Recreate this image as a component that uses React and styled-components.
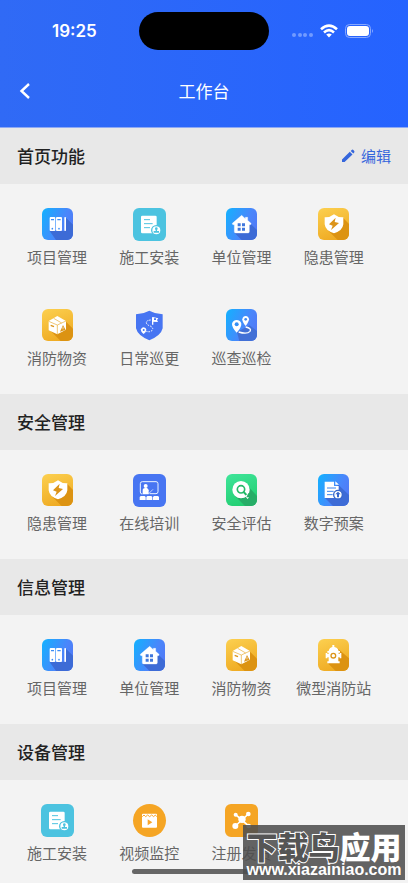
import React from 'react';
import styled, { createGlobalStyle } from 'styled-components';

const GlobalStyle = createGlobalStyle`
  * {
    box-sizing: border-box;
  }
  body {
    margin: 0;
    background: #f3f3f3;
    font-family: "Noto Sans CJK SC", sans-serif;
  }
`;

const gradients = {
  blue: 'linear-gradient(115deg, #12b2ff 0%, #4a86fb 60%, #5474f4 100%)',
  gold: 'linear-gradient(160deg, #fcd050 0%, #eda51c 100%)',
  green: 'linear-gradient(160deg, #3fe59a 0%, #1fcb6c 100%)',
  teal: '#4cc3e0',
  royal: '#4775f2',
  amber: '#f5a524',
  none: 'transparent',
};

const Screen = styled.div`
  display: flex;
  flex-direction: column;
  height: 100vh;
  position: relative;
  overflow: hidden;
`;
const Header = styled.header`
  flex: none;
  padding-bottom: 7px;
  color: white;
  background: linear-gradient(90deg, #306af5, #2563ff);
  border-bottom: 1px solid #8ea9f3;
`;
const StatusBar = styled.div`
  display: grid;
  grid-template-columns: 1fr 130px 1fr;
  align-items: center;
  height: 62px;
`;
const Time = styled.time`
  padding-left: 52px;
  font: 600 17px/22px Inter, sans-serif;
`;
const Island = styled.div`
  height: 38px;
  border-radius: 19px;
  background: black;
`;
const StatusIcons = styled.div`
  display: flex;
  align-items: center;
  justify-content: flex-end;
  gap: 7px;
  padding-right: 34px;
`;
const NavBar = styled.nav`
  display: grid;
  grid-template-columns: 50px 1fr 50px;
  align-items: center;
  height: 58px;
`;
const BackButton = styled.button`
  display: flex;
  padding: 8px 18px;
  border: 0;
  color: inherit;
  background: none;
`;
const PageTitle = styled.h1`
  margin: 0;
  font-size: 17px;
  font-weight: 400;
  line-height: 24px;
  text-align: center;
`;

const Content = styled.main`
  flex: 1;
  min-height: 0;
  overflow-y: auto;
  scrollbar-width: none;
`;
const SectionHead = styled.div`
  display: flex;
  align-items: center;
  justify-content: space-between;
  height: 56px;
  padding: 0 17px;
  background: #e8e8e8;
`;
const SectionTitle = styled.h2`
  margin: 0;
  color: #222;
  font-size: 17px;
  font-weight: 500;
  line-height: 24px;
`;
const EditButton = styled.button`
  display: flex;
  align-items: center;
  gap: 6px;
  padding: 0;
  border: 0;
  color: #3566dc;
  background: none;
  font: inherit;
  font-size: 15px;
  line-height: 20px;
`;
const Grid = styled.div`
  display: grid;
  grid-template-columns: repeat(4, 1fr);
  padding: 0 28px 8px 11px;
`;
const Item = styled.button`
  display: flex;
  flex-direction: column;
  align-items: center;
  gap: 6px;
  padding: 24px 0 18px;
  border: 0;
  color: #666;
  background: none;
  font: inherit;
  font-size: 15px;
  line-height: 20px;
  white-space: nowrap;
`;
const IconBox = styled.span`
  display: flex;
  justify-content: center;
  width: 33px;
  height: 33px;
`;
const Tile = styled.svg`
  width: ${({$full}) => ($full ? '33px' : '31px')};
  height: ${({$full}) => ($full ? '33px' : '32px')};
  border-radius: ${({$round}) => ($round ? '50%' : '6px')};
  background: ${({$fill}) => gradients[$fill]};
`;

const HomeBar = styled.div`
  position: absolute;
  bottom: 9px;
  left: 50%;
  width: 144px;
  height: 5px;
  margin-left: -72px;
  border-radius: 3px;
  background: #666;
`;
const Watermark = styled.div`
  position: absolute;
  right: 3px;
  bottom: 3px;
  width: 162px;
  height: 55px;
  padding-top: 7px;
  color: white;
  background: rgba(78, 78, 78, 0.88);
  text-align: center;
  white-space: nowrap;
`;
const MarkName = styled.div`
  font-size: 31px;
  font-weight: 900;
  line-height: 28px;
`;
const Outlined = styled.span`
  color: #555;
  -webkit-text-stroke: 2px white;
  paint-order: stroke fill;
`;
const MarkUrl = styled.div`
  font: 700 16px/20px "Liberation Sans", sans-serif;
`;

const Binders = () => (
  <>
    <path d="M26 69L45 96H96V50L75 29V69Z" fill="#3d6bd6" />
    <rect x="26" y="27" width="17" height="42" rx="3" fill="white" />
    <rect x="45" y="27" width="18" height="42" rx="3" fill="white" />
    <rect x="70" y="27" width="5" height="42" rx="2" fill="white" />
    <path d="M30 35h9M49 35h10" stroke="#3c8df5" strokeWidth="4" />
    <circle cx="34" cy="62" r="2.5" fill="#3c8df5" />
    <circle cx="54" cy="62" r="2.5" fill="#3c8df5" />
  </>
);

const Install = () => (
  <>
    <rect x="24" y="23" width="47" height="53" rx="4" fill="white" />
    <path d="M33 35h18M33 47h26M33 59h18" stroke="#4cc3e0" strokeWidth="3" />
    <circle cx="70" cy="67" r="14" fill="white" stroke="#4cc3e0" strokeWidth="4" />
    <circle cx="70" cy="62" r="4" fill="#4cc3e0" />
    <path d="M68 64h4v5h6v5H62v-5h6z" fill="#4cc3e0" />
  </>
);

const House = () => (
  <>
    <path d="M28 74L50 96H96V66L77 48Z" fill="#3d6bd6" />
    <path
      d="M50 22L22 46q-1 4 3 4h3v21q0 4 4 4h37q4 0 4-4V50h3q4-1 2-4L68 37v-9h-7v4z"
      fill="white" stroke="white" strokeLinejoin="round"
    />
    <path d="M38 46h9v9h-9zM51 46h9v9h-9zM38 59h9v9h-9zM51 59h9v9h-9z" fill="#4077dc" />
  </>
);

const Hazard = () => (
  <>
    <path d="M34 68L62 96H96V48L78 29Z" fill="#dc9312" />
    <path d="M51 19Q63 29 79 28V49Q77 68 51 76Q25 68 23 49V28Q39 29 51 19Z" fill="white" />
    <path d="M56 29L36 49l11 4-5 13 24-21-13-3z" fill="#dc9419" />
  </>
);

const Supplies = () => (
  <>
    <path d="M27 64L59 96H96V59L75 38Z" fill="#dc9312" />
    <path d="M49 21L75 36V62L49 76L23 64V36Z" fill="white" />
    <path d="M23 37L49 48L75 36M49 48V75M38 28L62 42" fill="none" stroke="#e7ab31" strokeWidth="2" />
    <path d="M29 49l10 4" stroke="#dc9419" strokeWidth="4" />
    <path d="M66 48l8 15-17 5z" fill="#dc9419" />
    <path d="M66 54v6M66 62v2" stroke="white" strokeWidth="2" />
  </>
);

const Patrol = () => (
  <>
    <path d="M49 5Q67 15 89 16V58Q84 80 49 94Q14 80 9 58V16Q31 15 49 5Z" fill="#4775f2" />
    <path
      d="M53 33Q36 35 41 44Q44 49 54 52Q64 60 55 66Q49 70 40 67"
      fill="none" stroke="white" strokeWidth="3" strokeDasharray="5 3"
    />
    <path d="M59 47V25" stroke="white" strokeWidth="4" />
    <path d="M59 24l17 4-4 5 3 6-16-1z" fill="white" />
    <path d="M63 28h6v5h-6z" fill="#4775f2" />
    <path d="M32 75Q22 67 24 61Q26 55 32 55Q39 56 40 62Q40 69 32 75Z" fill="white" />
    <circle cx="32" cy="63" r="3" fill="#4775f2" />
  </>
);

const Route = () => (
  <>
    <path d="M36 69L43 96H96V66L74 49Z" fill="#4270d6" />
    <path d="M35 71Q20 54 21 44Q24 33 35 33Q46 33 49 44Q50 54 35 71Z" fill="white" />
    <circle cx="35" cy="46" r="6" fill="#348ff5" />
    <path d="M62 51Q51 38 52 31Q54 21 62 21Q71 22 72 31Q72 38 62 51Z" fill="white" />
    <circle cx="62" cy="31" r="4" fill="#4389ef" />
    <path d="M62 54Q81 58 75 67Q66 77 41 69" fill="none" stroke="white" strokeWidth="4" />
  </>
);

const Training = () => (
  <>
    <path
      d="M28 60h-1q-5 0-5-6V29q0-6 6-6h41q6 0 6 6v24q0 6-6 6H50"
      fill="none" stroke="#edf5ff" strokeWidth="3"
    />
    <circle cx="38" cy="36" r="6" fill="white" />
    <path d="M29 61V47q1-5 7-5h5q5 1 6 7v12z" fill="white" />
    <path d="M46 60L60 46" stroke="white" strokeWidth="2" />
    {[20, 40, 60].map((x) => (
      <path key={x} d={`M${x} 78v-9l3-3h12l3 3v9z`} fill="white" />
    ))}
  </>
);

const Assess = () => (
  <>
    <path d="M31 67L60 96H96V66L68 35Z" fill="#27ad67" />
    <circle cx="48" cy="47" r="26" fill="white" />
    <circle cx="48" cy="46" r="11" fill="none" stroke="#24b968" strokeWidth="5" />
    <path d="M56 54l10 11" stroke="#24b968" strokeWidth="6" />
    <path d="M60 67l8 8 6-8-7-7z" fill="white" />
    <path d="M70 58h9v12H64z" fill="#27ad67" />
  </>
);

const Plan = () => (
  <>
    <path d="M24 72L48 96H96V63L64 32Z" fill="#3d6bd6" />
    <path d="M23 23H51V36H65V72H23Z" fill="white" />
    <path d="M55 22l11 10H55z" fill="white" />
    <path d="M30 42h27M30 52h20M30 62h17" stroke="#3c83ec" strokeWidth="3" />
    <circle cx="63" cy="62" r="13" fill="white" stroke="#3566cb" strokeWidth="4" />
    <path d="M63 53l8 8h-5v9h-6v-9h-5z" fill="#3566cb" />
  </>
);

const Hydrant = () => (
  <>
    <path d="M34 74L56 96H96V58L61 28Z" fill="#dc9312" />
    <path
      d="M46 18h6v6q11 2 13 12h4v5h-4v4h3v-3h5v16h-5v-3h-4v12h4v6H31v-6h4V55h-4v3h-5V42h5v3h4v-4h-4v-5h4q2-10 11-12z"
      fill="white"
    />
    <circle cx="49" cy="50" r="7" fill="none" stroke="#dc9419" strokeWidth="4" />
  </>
);

const Video = () => (
  <>
    <rect x="27" y="29" width="45" height="42" rx="3" fill="white" />
    <path d="M28 38l5-5 5 5 6-5 6 5 6-5 6 5 5-5 4 5" fill="none" stroke="#f9a62c" strokeWidth="3" />
    <path d="M44 46l14 9-14 9z" fill="#f9a62c" />
  </>
);

const Nodes = () => (
  <>
    <path d="M32 32L71 66M70 30L31 66" stroke="white" strokeWidth="5" />
    <circle cx="51" cy="46" r="11" fill="white" />
    <circle cx="32" cy="32" r="6" fill="white" />
    <circle cx="70" cy="30" r="7" fill="white" />
    <circle cx="31" cy="66" r="9" fill="white" />
    <circle cx="71" cy="66" r="7" fill="white" />
  </>
);

const functions = {
  project: { label: '项目管理', fill: 'blue', Art: Binders },
  install: { label: '施工安装', fill: 'teal', full: true, Art: Install },
  unit: { label: '单位管理', fill: 'blue', Art: House },
  hazard: { label: '隐患管理', fill: 'gold', Art: Hazard },
  supplies: { label: '消防物资', fill: 'gold', Art: Supplies },
  patrol: { label: '日常巡更', fill: 'none', full: true, Art: Patrol },
  route: { label: '巡查巡检', fill: 'blue', Art: Route },
  training: { label: '在线培训', fill: 'royal', full: true, Art: Training },
  assess: { label: '安全评估', fill: 'green', Art: Assess },
  plan: { label: '数字预案', fill: 'blue', Art: Plan },
  station: { label: '微型消防站', fill: 'gold', Art: Hydrant },
  video: { label: '视频监控', fill: 'amber', full: true, round: true, Art: Video },
  register: { label: '注册发货', fill: 'amber', full: true, Art: Nodes },
};

const sections = [
  {
    title: '首页功能',
    editable: true,
    items: ['project', 'install', 'unit', 'hazard', 'supplies', 'patrol', 'route'],
  },
  { title: '安全管理', items: ['hazard', 'training', 'assess', 'plan'] },
  { title: '信息管理', items: ['project', 'unit', 'supplies', 'station'] },
  { title: '设备管理', items: ['install', 'video', 'register'] },
];

const FunctionItem = ({label, fill, full, round, Art}) => (
  <Item type="button">
    <IconBox>
      <Tile
        viewBox={full ? '0 0 99 99' : '3 0 93 96'}
        $fill={fill}
        $full={full}
        $round={round}
        aria-hidden="true"
      >
        <Art />
      </Tile>
    </IconBox>
    {label}
  </Item>
);

const App = () => {
  return (
    <Screen>
      <GlobalStyle />
      <Header>
        <StatusBar>
          <Time>19:25</Time>
          <Island />
          <StatusIcons>
            <svg width="21" height="14" viewBox="0 0 21 14" fill="#729bff">
              <circle cx="2" cy="11" r="2" />
              <circle cx="8" cy="11" r="2" />
              <circle cx="13" cy="11" r="2" />
              <circle cx="19" cy="11" r="2" />
            </svg>
            <svg width="18" height="14" viewBox="0 0 18 14" fill="none" stroke="white" strokeWidth="2.6">
              <path d="M1 5.2Q9-2 17 5.2M4 8.4Q9 4 14 8.4" />
              <path d="M6.2 10.6Q9 8.2 11.8 10.6L9 13.4Z" fill="white" stroke="none" />
            </svg>
            <svg width="29" height="14" viewBox="0 0 29 14" fill="none">
              <rect x="0.5" y="0.5" width="25" height="13" rx="4" stroke="#86a8ff" />
              <rect x="2" y="2" width="22" height="10" rx="3" fill="white" />
              <path d="M27 5q2 2 0 4z" fill="#86a8ff" />
            </svg>
          </StatusIcons>
        </StatusBar>
        <NavBar>
          <BackButton type="button" aria-label="返回">
            <svg width="14" height="16" viewBox="0 0 14 16" fill="none" stroke="white" strokeWidth="2.4">
              <path d="M11 1L3.5 8L11 15" />
            </svg>
          </BackButton>
          <PageTitle>工作台</PageTitle>
        </NavBar>
      </Header>
      <Content>
        {sections.map(({title, editable, items}) => (
          <section key={title}>
            <SectionHead>
              <SectionTitle>{title}</SectionTitle>
              {editable && (
                <EditButton type="button">
                  <svg width="14" height="14" viewBox="0 0 14 14" fill="#3566dc">
                    <path d="M1 10.5L8.8 2.7l2.7 2.7L3.6 13H1zM9.7 1.9l1-1q.9-.6 1.7.1l.8.9q.6.9 0 1.6l-.9.9z" />
                  </svg>
                  编辑
                </EditButton>
              )}
            </SectionHead>
            <Grid>
              {items.map((id) => (
                <FunctionItem key={id} {...functions[id]} />
              ))}
            </Grid>
          </section>
        ))}
      </Content>
      <HomeBar />
      <Watermark>
        <MarkName><Outlined>下载鸟</Outlined>应用</MarkName>
        <MarkUrl>www.xiazainiao.com</MarkUrl>
      </Watermark>
    </Screen>
  );
};

export default App;
